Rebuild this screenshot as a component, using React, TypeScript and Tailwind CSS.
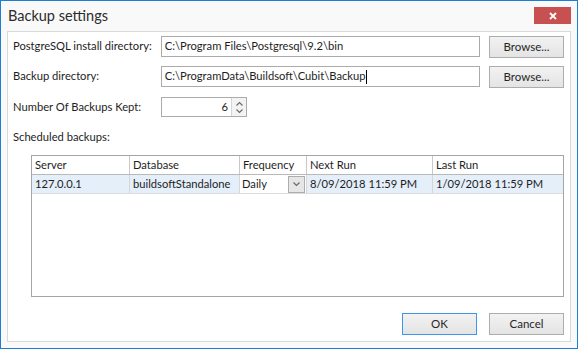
import React from 'react';

const font = { fontFamily: 'Lato, "Noto Sans", sans-serif' };

const Chevron = ({ up = false }: { up?: boolean }) => (
  <svg width="7" height="5" viewBox="0 0 7 5" className="block">
    <path d={up ? 'M0.5 4.5L3.5 1.5L6.5 4.5' : 'M0.5 0.5L3.5 3.5L6.5 0.5'} fill="none" stroke="#6b6b6b" strokeWidth="1.2" />
  </svg>
);

const Button = ({ label, focused = false }: { label: string; focused?: boolean }) => (
  <div
    className={`w-[75px] h-[22px] flex items-center justify-center text-[11.5px] text-[#262626] bg-gradient-to-b from-[#f2f2f2] to-[#e4e4e4] border ${
      focused ? 'border-[#3c96f0]' : 'border-[#adadad]'
    }`}
  >
    {label}
  </div>
);

const TextBox = ({ value, caret = false }: { value: string; caret?: boolean }) => (
  <div className="w-[320px] h-[21px] border border-[#ababab] bg-white flex items-center pl-[3px] text-[#1e1e1e] whitespace-nowrap">
    <span>{value}</span>
    {caret && <span className="w-px h-[14px] bg-black" />}
  </div>
);

const columns = ['Server', 'Database', 'Frequency', 'Next Run', 'Last Run'];

export default function App() {
  return (
    <div style={font} className="w-[578px] h-[349px] border border-[#1c7fd1] bg-[#f9f9f9] flex flex-col text-[#1e1e1e]">
      {/* title bar */}
      <div className="h-[30px] flex items-start shrink-0">
        <div className="pl-[7px] pt-[4px] text-[14.5px] text-[#2b2b2b]">Backup settings</div>
        <div className="ml-auto mt-[6px] mr-[6px] w-[37px] h-[17px] bg-[#c75050] flex items-center justify-center">
          <svg width="8" height="8" viewBox="0 0 8 8">
            <path d="M1 1L7 7M7 1L1 7" stroke="#fff" strokeWidth="1.8" />
          </svg>
        </div>
      </div>

      {/* panel */}
      <div className="flex-1 mx-[6px] mb-[6px] border border-[#d9d9d9] bg-white flex flex-col pt-[4px] pl-[5px] pr-[6px] text-[11.2px] whitespace-nowrap">
        <div className="flex items-center h-[21px]">
          <div className="w-[148px]">PostgreSQL install directory:</div>
          <TextBox value="C:\Program Files\Postgresql\9.2\bin" />
          <div className="ml-[9px]">
            <Button label="Browse..." />
          </div>
        </div>
        <div className="flex items-center h-[21px] mt-[9px]">
          <div className="w-[148px]">Backup directory:</div>
          <TextBox value="C:\ProgramData\Buildsoft\Cubit\Backup" caret />
          <div className="ml-[9px]">
            <Button label="Browse..." />
          </div>
        </div>
        <div className="flex items-center h-[20px] mt-[10px]">
          <div className="w-[148px]">Number Of Backups Kept:</div>
          <div className="w-[86px] h-[20px] border border-[#ababab] flex">
            <div className="flex-1 text-right pr-[3px] leading-[18px]">6</div>
            <div className="w-[15px] border-l border-[#d6d6d6] bg-[#f3f3f3] flex flex-col items-center justify-center gap-[3px]">
              <Chevron up />
              <Chevron />
            </div>
          </div>
        </div>

        <div className="mt-[12px] h-[16px] leading-[16px]">Scheduled backups:</div>

        {/* grid */}
        <div className="ml-[18px] mt-[10px] h-[142px] border border-[#a5a5a5] bg-white flex flex-col">
          <div className="grid grid-cols-[98px_110px_67px_126px_1fr] h-[19px] border-b border-[#b9b9b9]">
            {columns.map((c, i) => (
              <div key={c} className={`pl-[3px] leading-[18px] ${i < 4 ? 'border-r border-[#c9c9c9]' : ''}`}>
                {c}
              </div>
            ))}
          </div>
          <div className="grid grid-cols-[98px_110px_67px_126px_1fr] h-[19px] border-b border-[#dcdcdc] bg-[#e4effa]">
            <div className="pl-[3px] leading-[18px] border-r border-[#d6d6d6]">127.0.0.1</div>
            <div className="pl-[3px] leading-[18px] border-r border-[#d6d6d6]">buildsoftStandalone</div>
            <div className="pl-[2px] bg-white flex items-center border-r border-[#d6d6d6]">
              <span className="flex-1">Daily</span>
              <div className="w-[17px] h-[17px] mr-[1px] border border-[#adadad] bg-[#e6e6e6] flex items-center justify-center">
                <Chevron />
              </div>
            </div>
            <div className="pl-[3px] leading-[18px] border-r border-[#d6d6d6]">8/09/2018 11:59 PM</div>
            <div className="pl-[3px] leading-[18px]">1/09/2018 11:59 PM</div>
          </div>
        </div>

        <div className="flex justify-end gap-[12px] mt-[16px]">
          <Button label="OK" focused />
          <Button label="Cancel" />
        </div>
      </div>
    </div>
  );
}
